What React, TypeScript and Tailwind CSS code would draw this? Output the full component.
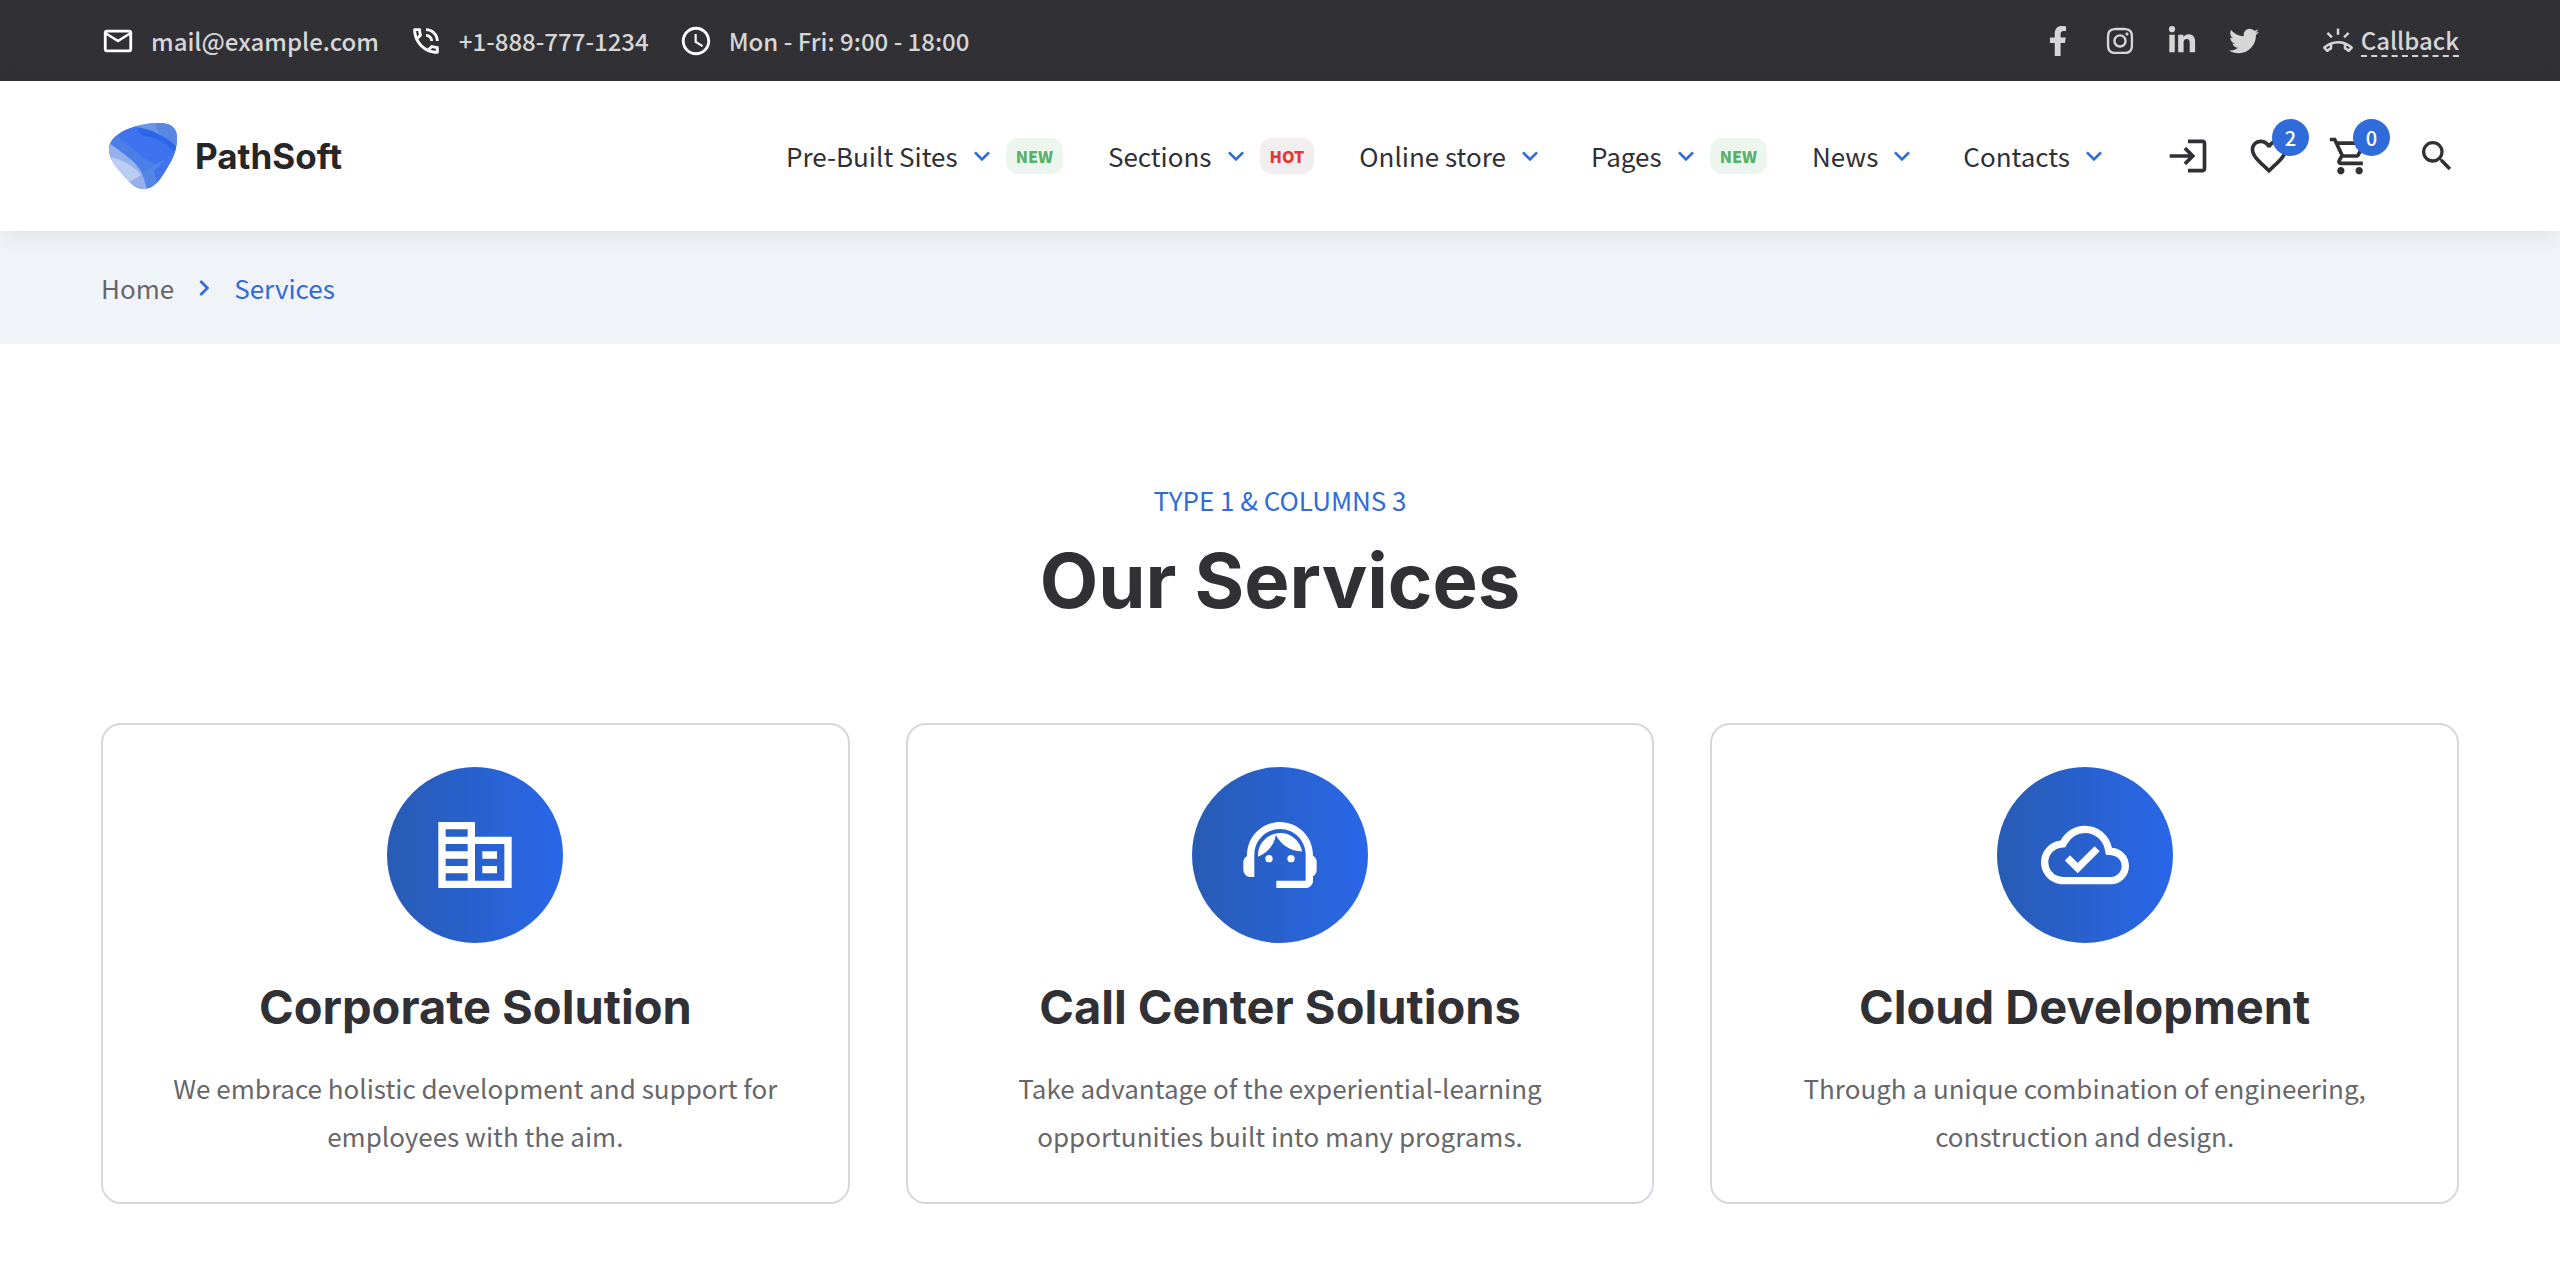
import type { ReactNode } from "react";
import type { IconType } from "react-icons";
import {
  MdAccessTime,
  MdChevronRight,
  MdExpandMore,
  MdFavoriteBorder,
  MdOutlineCloudDone,
  MdOutlineCorporateFare,
  MdOutlineLogin,
  MdOutlineMail,
  MdOutlinePhoneInTalk,
  MdOutlineRingVolume,
  MdOutlineShoppingCart,
  MdOutlineSupportAgent,
  MdSearch,
} from "react-icons/md";
import { FaFacebookF, FaInstagram, FaLinkedinIn, FaTwitter } from "react-icons/fa";

const contacts: { icon: IconType; text: string; href?: string }[] = [
  { icon: MdOutlineMail, text: "mail@example.com", href: "#mail" },
  { icon: MdOutlinePhoneInTalk, text: "+1-888-777-1234", href: "#phone" },
  { icon: MdAccessTime, text: "Mon - Fri: 9:00 - 18:00" },
];

const socials: { icon: IconType; label: string }[] = [
  { icon: FaFacebookF, label: "Facebook" },
  { icon: FaInstagram, label: "Instagram" },
  { icon: FaLinkedinIn, label: "LinkedIn" },
  { icon: FaTwitter, label: "Twitter" },
];

const navItems: { label: string; tag?: "NEW" | "HOT" }[] = [
  { label: "Pre-Built Sites", tag: "NEW" },
  { label: "Sections", tag: "HOT" },
  { label: "Online store" },
  { label: "Pages", tag: "NEW" },
  { label: "News" },
  { label: "Contacts" },
];

const services: { icon: IconType; title: string; text: string }[] = [
  {
    icon: MdOutlineCorporateFare,
    title: "Corporate Solution",
    text: "We embrace holistic development and support for employees with the aim.",
  },
  {
    icon: MdOutlineSupportAgent,
    title: "Call Center Solutions",
    text: "Take advantage of the experiential-learning opportunities built into many programs.",
  },
  {
    icon: MdOutlineCloudDone,
    title: "Cloud Development",
    text: "Through a unique combination of engineering, construction and design.",
  },
];

function LogoMark() {
  return (
    <svg viewBox="0 0 68 66" className="h-[66px] w-[68px]" aria-hidden="true">
      <defs>
        <clipPath id="blob">
          <path d="M0 27C0 19 5 13 14 8C24 3 38 0 50 0C62 0 68 5 68 15C68 26 64 36 58 45C51 57 45 66 34 66C27 66 22 61 16 54C7 44 0 36 0 27Z" />
        </clipPath>
      </defs>
      <g clipPath="url(#blob)">
        <rect width="68" height="66" fill="#5585e3" />
        <path d="M24 4C38 -2 60 -3 68 4V25C56 14 40 6 24 4Z" fill="#6a94e6" />
        <path d="M46 0H68V25L52 14Z" fill="#5787e2" />
        <path d="M25 4C42 6 57 15 68 28V40L44 66H38L30 50L6 15C12 9 18 6 25 4Z" fill="#3f72ee" />
        <path d="M33 13C44 13 55 18 66 29L68 24C56 13 42 6 27 4Z" fill="#2a67e6" />
        <path d="M0 18L8 13C15 19 22 24 32 33L46 41L34 52L0 23Z" fill="#4c7ee8" />
        <path d="M56 36L42 44L33 51L38 66H46L60 46Z" fill="#5585e4" />
        <path d="M68 25L64 44L48 60L45 48L56 36Z" fill="#4275ed" />
        <path d="M0 20C12 29 27 38 33 50L38 66H22L0 40Z" fill="#96b1ea" />
        <path d="M0 34C13 36 25 43 32 52L19 60L0 48Z" fill="#bccdf3" />
      </g>
    </svg>
  );
}

function Container({ className, children }: { className: string; children: ReactNode }) {
  return <div className={`px-[101px] ${className}`}>{children}</div>;
}

function CountBadge({ children }: { children: ReactNode }) {
  return (
    <span className="absolute -top-[15px] left-[25px] flex size-[37px] items-center justify-center rounded-full bg-[#306bdb] text-[20px] font-medium leading-none text-white">
      {children}
    </span>
  );
}

export default function App() {
  return (
    <div className="min-h-screen bg-white font-['Noto_Sans_CJK_SC','Noto_Sans',sans-serif] text-[26px] leading-[48px] text-[#303035]">
      <div className="bg-[#303035] text-[24px] font-medium text-[#d6d6d7]">
        <Container className="flex h-[81px] items-center justify-between">
          <ul className="flex items-center gap-[30px]">
            {contacts.map(({ icon: Icon, text, href }) => (
              <li key={text} className="flex items-center gap-4">
                <Icon className="size-[34px] text-white" />
                {href ? <a href={href}>{text}</a> : <span>{text}</span>}
              </li>
            ))}
          </ul>
          <div className="flex items-center">
            <ul className="flex items-center gap-8">
              {socials.map(({ icon: Icon, label }) => (
                <li key={label}>
                  <a href="#social" aria-label={label}>
                    <Icon className="size-[30px]" />
                  </a>
                </li>
              ))}
            </ul>
            <button type="button" className="ml-16 flex items-center gap-2">
              <MdOutlineRingVolume className="size-[30px]" />
              <span className="border-b-2 border-dashed border-[#d6d6d7] leading-[30px]">Callback</span>
            </button>
          </div>
        </Container>
      </div>

      <header className="relative bg-white shadow-[0_6px_20px_rgba(48,48,53,0.08)]">
        <Container className="flex h-[150px] items-center justify-between">
          <a href="#home" className="flex items-center gap-[18px] pl-2 font-['Inter',sans-serif] text-[35px] font-bold text-[#262628]">
            <LogoMark />
            PathSoft
          </a>
          <div className="flex items-center gap-14">
            <nav aria-label="Main">
              <ul className="flex items-center gap-[45px]">
                {navItems.map(({ label, tag }) => (
                  <li key={label}>
                    <a href="#nav" className="flex items-center gap-2">
                      {label}
                      <MdExpandMore className="size-8 text-[#306bdb]" />
                      {tag === "NEW" && (
                        <span className="rounded-xl bg-[#ecf6ee] px-[10px] text-[16px] font-black leading-9 text-[#5bb068]">NEW</span>
                      )}
                      {tag === "HOT" && (
                        <span className="rounded-xl bg-[#f2edef] px-[10px] text-[16px] font-black leading-9 text-[#e03a34]">HOT</span>
                      )}
                    </a>
                  </li>
                ))}
              </ul>
            </nav>
            <div className="flex items-center gap-[37px]">
              <button type="button" aria-label="Log in">
                <MdOutlineLogin className="size-11" />
              </button>
              <button type="button" aria-label="Wishlist" className="relative">
                <MdFavoriteBorder className="size-11" />
                <CountBadge>2</CountBadge>
              </button>
              <button type="button" aria-label="Cart" className="relative">
                <MdOutlineShoppingCart className="size-11" />
                <CountBadge>0</CountBadge>
              </button>
              <button type="button" aria-label="Search" className="flex w-[50px] justify-end pr-0.5">
                <MdSearch className="size-10" />
              </button>
            </div>
          </div>
        </Container>
      </header>

      <nav aria-label="Breadcrumb" className="bg-[#f0f3f8]">
        <Container className="flex h-[113px] items-center gap-[14px]">
          <a href="#home" className="text-[#67676b]">Home</a>
          <MdChevronRight className="size-8 text-[#306bdb]" />
          <a href="#services" aria-current="page" className="text-[#306bdb]">Services</a>
        </Container>
      </nav>

      <main>
        <Container className="pb-20 pt-[132px]">
          <div className="text-center">
            <p className="text-[#306bdb]">TYPE 1 &amp; COLUMNS 3</p>
            <h1 className="mt-4 font-['Inter',sans-serif] text-[76px] font-bold leading-[80px]">Our Services</h1>
          </div>
          <div className="mt-[103px] grid grid-cols-3 gap-14">
            {services.map(({ icon: Icon, title, text }) => (
              <article
                key={title}
                className="flex flex-col items-center rounded-[20px] border-2 border-[#d6d7df] px-14 py-[42px] text-center"
              >
                <div className="flex size-44 items-center justify-center rounded-full bg-linear-to-r from-[#285bb4] to-[#2967e9] text-white">
                  <Icon className="size-[88px]" />
                </div>
                <h2 className="mt-[38px] font-['Inter',sans-serif] text-[47px] font-bold leading-[52px]">{title}</h2>
                <p className="mt-[31px] text-[#67676b]">{text}</p>
              </article>
            ))}
          </div>
        </Container>
      </main>
    </div>
  );
}
